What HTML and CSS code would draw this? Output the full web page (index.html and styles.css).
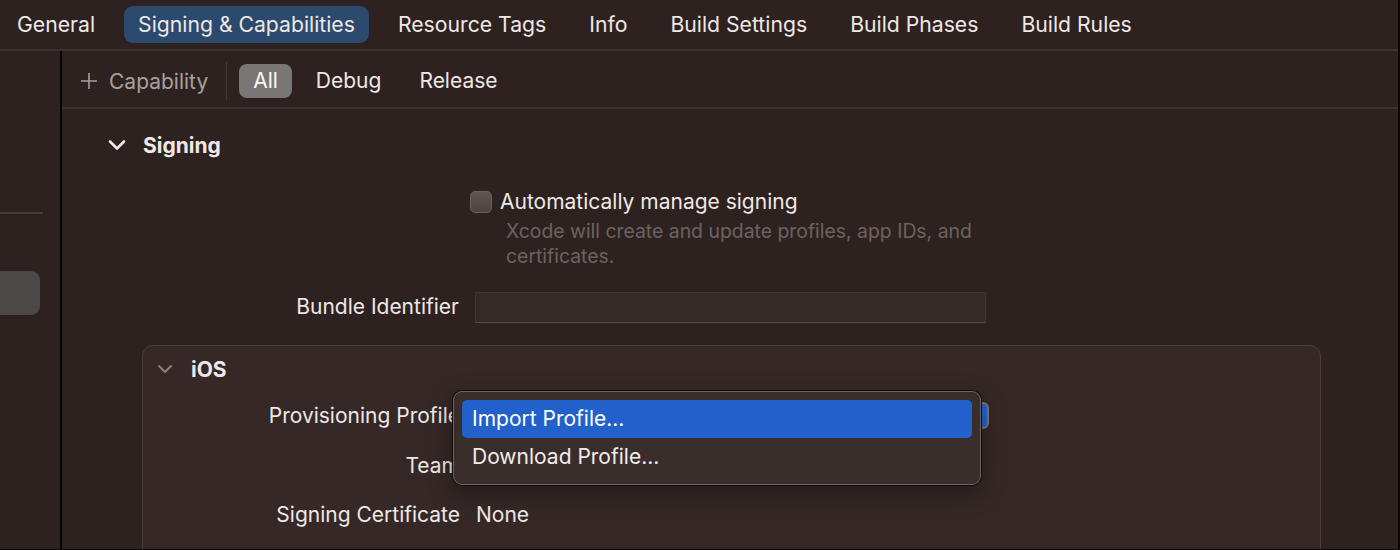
FILE: index.html
```html
<!DOCTYPE html>
<html>
<head>
<meta charset="utf-8">
<link rel="stylesheet" href="styles.css">
</head>
<body>
<div class="window">
  <nav class="tabs">
    <span class="tab">General</span>
    <span class="tab active">Signing &amp; Capabilities</span>
    <span class="tab">Resource Tags</span>
    <span class="tab">Info</span>
    <span class="tab">Build Settings</span>
    <span class="tab">Build Phases</span>
    <span class="tab">Build Rules</span>
  </nav>
  <div class="body">
    <aside class="sidebar">
      <div class="side-line"></div>
      <div class="side-item"></div>
    </aside>
    <main class="main">
      <div class="toolbar">
        <span class="add-cap">
          <svg class="plus" width="18" height="18" viewBox="0 0 18 18"><path d="M9 1v16M1 9h16" stroke="#a8a09e" stroke-width="1.6" fill="none"/></svg>
          Capability
        </span>
        <span class="tb-sep"></span>
        <span class="seg active">All</span>
        <span class="seg">Debug</span>
        <span class="seg">Release</span>
      </div>
      <section class="content">
        <div class="sec-head">
          <svg class="chev" width="18" height="12" viewBox="0 0 18 12"><path d="M2 2.5l7 7 7-7" stroke="#f0eae8" stroke-width="2.6" fill="none" stroke-linecap="round" stroke-linejoin="round"/></svg>
          <span class="sec-title">Signing</span>
        </div>
        <div class="form">
          <div class="label"></div>
          <div class="value check-row">
            <span class="checkbox"></span>
            <div>
              <div class="check-label">Automatically manage signing</div>
              <div class="hint">Xcode will create and update profiles, app IDs, and<br>certificates.</div>
            </div>
          </div>
          <div class="label bundle-label">Bundle Identifier</div>
          <div class="value"><div class="field"></div></div>
        </div>
        <div class="platform">
          <div class="plat-head">
            <svg class="chev small" width="16" height="10" viewBox="0 0 16 10"><path d="M2 2l6 6 6-6" stroke="#8a807e" stroke-width="2" fill="none" stroke-linecap="round" stroke-linejoin="round"/></svg>
            <span class="plat-title">iOS</span>
          </div>
          <div class="pform">
            <div class="plabel">Provisioning Profile</div>
            <div class="pvalue"><div class="popup-btn"></div></div>
            <div class="plabel">Team</div>
            <div class="pvalue"></div>
            <div class="plabel">Signing Certificate</div>
            <div class="pvalue">None</div>
          </div>
          <div class="menu">
            <div class="menu-item selected">Import Profile...</div>
            <div class="menu-item">Download Profile...</div>
          </div>
        </div>
      </section>
    </main>
  </div>
</div>
</body>
</html>
```

FILE: styles.css
```css
html, body {
  margin: 0;
  padding: 0;
  background: #2e2220;
  overflow: hidden;
}
body {
  font-family: "Inter", "Roboto", "Liberation Sans", sans-serif;
  color: #eee8e6;
  font-size: 21px;
  -webkit-font-smoothing: antialiased;
}
.window {
  width: 1398px;
  height: 549px;
  border-right: 2px solid #0c0706;
  border-bottom: 1px solid #0c0706;
  display: flex;
  flex-direction: column;
  overflow: hidden;
}
.tabs {
  height: 51px;
  flex: none;
  display: flex;
  align-items: center;
  gap: 15px;
  padding-left: 3px;
  border-bottom: 2px solid #3d3230;
  box-sizing: border-box;
  font-size: 21.2px;
}
.tab {
  padding: 0 14px;
  height: 37px;
  line-height: 37px;
  border-radius: 9px;
  white-space: nowrap;
}
.tab.active {
  background: #2c4a6e;
}
.body {
  flex: 1;
  display: flex;
  min-height: 0;
}
.sidebar {
  width: 60px;
  flex: none;
  border-right: 2px solid #050302;
  display: flex;
  flex-direction: column;
}
.side-line {
  margin-top: 161px;
  width: 43px;
  height: 2px;
  background: #463b39;
}
.side-item {
  margin-top: 57px;
  width: 40px;
  height: 44px;
  border-radius: 0 9px 9px 0;
  background: #4b4847;
}
.main {
  flex: 1;
  display: flex;
  flex-direction: column;
  min-width: 0;
}
.toolbar {
  height: 58px;
  flex: none;
  display: flex;
  align-items: center;
  padding-left: 18px;
  padding-top: 4px;
  border-bottom: 2px solid #3d3230;
  box-sizing: border-box;
}
.add-cap {
  display: flex;
  align-items: center;
  gap: 11px;
  color: #a8a09e;
}
.tb-sep {
  width: 1px;
  height: 38px;
  background: #433836;
  margin: 0 12px 0 18px;
}
.seg {
  padding: 0 14px;
  height: 34px;
  line-height: 34px;
  border-radius: 8px;
  margin-right: 10px;
}
.seg.active {
  background: #7a7675;
  color: #fbf8f7;
}
.content {
  flex: 1;
  padding-top: 23px;
  position: relative;
}
.sec-head {
  display: flex;
  align-items: center;
  height: 26px;
  padding-left: 46px;
}
.chev {
  margin-right: 17px;
}
.sec-title {
  font-weight: 700;
}
.form {
  display: grid;
  grid-template-columns: 397px 1fr;
  column-gap: 16px;
  margin-top: 31px;
}
.label {
  text-align: right;
}
.check-row {
  display: flex;
  align-items: flex-start;
  margin-left: -5px;
}
.checkbox {
  width: 20px;
  height: 20px;
  margin-top: 2px;
  margin-right: 8px;
  border-radius: 5px;
  background: linear-gradient(#5f5654, #4d4442);
  border: 1px solid #6b6260;
  flex: none;
}
.check-label {
  line-height: 25px;
}
.hint {
  color: #6c6260;
  font-size: 19.4px;
  line-height: 25px;
  margin-top: 5px;
  padding-left: 6px;
}
.bundle-label {
  margin-top: 23px;
  line-height: 30px;
}
.field {
  margin-top: 23px;
  width: 511px;
  height: 31px;
  box-sizing: border-box;
  background: #352a28;
  border: 1px solid #3f3533;
  border-bottom-color: #554a48;
}
.platform {
  position: relative;
  margin: 22px 77px 0 80px;
  height: 260px;
  border: 1px solid #4a3f3d;
  border-radius: 11px;
  background: #352826;
}
.plat-head {
  display: flex;
  align-items: center;
  height: 22px;
  margin-top: 12px;
  padding-left: 14px;
}
.chev.small {
  margin-right: 18px;
}
.plat-title {
  font-weight: 700;
}
.pform {
  display: grid;
  grid-template-columns: 317px 1fr;
  column-gap: 16px;
  row-gap: 22.5px;
  margin-top: 22px;
}
.plabel {
  text-align: right;
  line-height: 27px;
}
.pvalue {
  line-height: 27px;
  min-height: 27px;
}
.popup-btn {
  margin-left: -8px;
  width: 521px;
  height: 27px;
  box-sizing: border-box;
  border-radius: 6px;
  background: #2262cc;
  border: 2px solid #7d7472;
}
.menu {
  position: absolute;
  left: 310px;
  top: 45px;
  width: 528px;
  height: 94px;
  box-sizing: border-box;
  padding: 8px;
  border-radius: 9px;
  background: #3a2e2c;
  border: 1px solid #6e6462;
  box-shadow: 0 0 0 1px #110a09, 0 8px 24px rgba(0,0,0,0.35);
}
.menu-item {
  height: 38px;
  line-height: 38px;
  padding-left: 10px;
  border-radius: 5px;
  color: #f2ecea;
}
.menu-item.selected {
  background: #2261cc;
  color: #ffffff;
}
```
